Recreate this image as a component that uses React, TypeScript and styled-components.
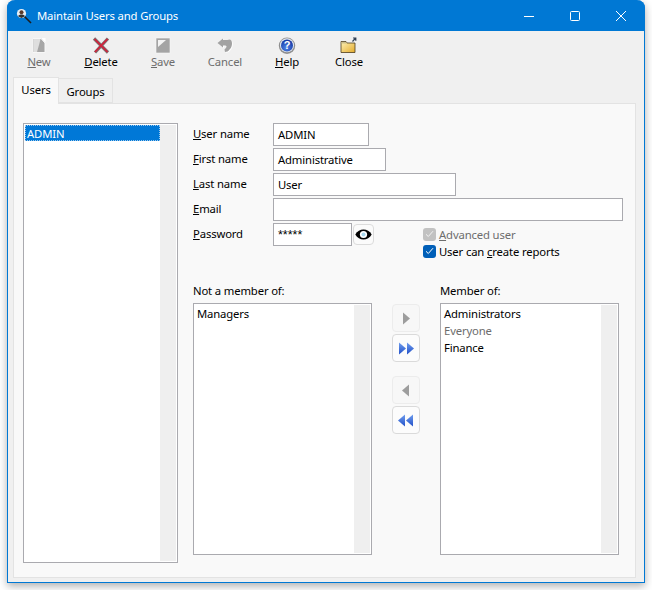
import React from "react";
import styled, { createGlobalStyle } from "styled-components";

const Global = createGlobalStyle`
  html, body { margin: 0; padding: 0; background: #fff; }
  body { width: 652px; height: 590px; overflow: hidden; font-family: "Noto Sans", "Open Sans", sans-serif; font-size: 11.3px; letter-spacing: -0.15px; color: #000; }
  #root { width: 652px; height: 590px; }
  * { box-sizing: border-box; }
  u { text-underline-offset: 1px; }
`;

const Page = styled.div`
  width: 652px;
  height: 590px;
  padding-left: 7px;
`;
const Window = styled.div`
  width: 638px;
  height: 583px;
  display: flex;
  flex-direction: column;
  background: #f0f0f0;
  border: 1px solid #0078d4;
  border-top: 0;
  border-radius: 8px 8px 0 0;
  box-shadow: 0 3px 9px rgba(0, 0, 0, 0.32);
`;
const TitleBar = styled.div`
  height: 31px;
  margin: 0 -1px;
  display: flex;
  align-items: center;
  background: #0078d4;
  border-radius: 8px 8px 0 0;
  color: #fff;
  padding: 0 1px 0 9px;
`;
const TitleText = styled.span`
  margin-left: 5px;
  flex: 1;
`;
const WinButton = styled.div`
  width: 46px;
  height: 31px;
  display: flex;
  align-items: center;
  justify-content: center;
`;
const Toolbar = styled.div`
  height: 46px;
  display: flex;
`;
const ToolItem = styled.div<{ $off?: boolean }>`
  width: 62px;
  display: flex;
  flex-direction: column;
  align-items: center;
  padding-top: 6px;
  color: ${(p) => (p.$off ? "#6d6d6d" : "#000")};
  line-height: 16px;
  svg { display: block; }
`;
const TabStrip = styled.div`
  height: 26px;
  padding-left: 5px;
  display: flex;
  align-items: flex-end;
`;
const Tab = styled.div<{ $active?: boolean }>`
  height: ${(p) => (p.$active ? 27 : 25)}px;
  width: ${(p) => (p.$active ? 46 : 54)}px;
  margin-bottom: ${(p) => (p.$active ? -1 : 0)}px;
  padding: ${(p) => (p.$active ? "0 0 4px" : "2px 0 0")};
  background: ${(p) => (p.$active ? "#f9f9f9" : "#f0f0f0")};
  border: 1px solid #e3e3e3;
  border-bottom: ${(p) => (p.$active ? "0" : "1px solid #e3e3e3")};
  border-left: ${(p) => (p.$active ? "1px solid #e3e3e3" : "0")};
  position: relative;
  z-index: ${(p) => (p.$active ? 1 : 0)};
  display: flex;
  align-items: center;
  justify-content: center;
`;
const Panel = styled.div`
  flex: 1;
  margin: 0 8px 4px 5px;
  background: #f9f9f9;
  border: 1px solid #e3e3e3;
  padding: 19px 0 0 9px;
  display: flex;
  gap: 15px;
  align-items: flex-start;
`;
const ListBox = styled.div<{ $w: number; $h: number }>`
  width: ${(p) => p.$w}px;
  height: ${(p) => p.$h}px;
  background: #fff;
  border: 1px solid #aaaaaf;
  padding: 1px;
  display: flex;
`;
const ListItems = styled.div<{ $padded?: boolean }>`
  flex: 1;
  padding: ${(p) => (p.$padded ? "0 2px" : "0")};
  line-height: 17px;
`;
const ScrollTrack = styled.div`
  width: 16px;
  background: #efefef;
`;
const UserRow = styled.div`
  height: 16px;
  line-height: 17px;
  padding-left: 2px;
  background: #0078d7;
  color: #fff;
  outline: 1px dotted #9dc9ee;
  outline-offset: -1px;
`;
const GroupItem = styled.div<{ $off?: boolean }>`
  color: ${(p) => (p.$off ? "#6d6d6d" : "#000")};
`;
const Form = styled.div`
  width: 430px;
`;
const Rows = styled.div`
  display: flex;
  flex-direction: column;
  gap: 2px;
`;
const Row = styled.div`
  display: flex;
  align-items: flex-start;
`;
const Label = styled.label`
  width: 80px;
  height: 23px;
  line-height: 22px;
`;
const Input = styled.div<{ $w: number }>`
  width: ${(p) => p.$w}px;
  height: 23px;
  flex: none;
  background: #fff;
  border: 1px solid #aaaaaf;
  padding-left: 4px;
  line-height: 22px;
`;
const Mask = styled.span`
  font-family: "Liberation Sans", sans-serif;
  font-size: 12.5px;
  letter-spacing: 0;
`;
const EyeButton = styled.div`
  width: 21px;
  height: 21px;
  margin: 1px 0 0 1px;
  background: #fbfbfb;
  border: 1px solid #dcdcdc;
  border-radius: 4px;
  display: flex;
  align-items: center;
  justify-content: center;
`;
const Checks = styled.div`
  margin-left: 49px;
  padding-top: 4px;
  display: flex;
  flex-direction: column;
  gap: 3px;
`;
const Check = styled.div<{ $off?: boolean }>`
  display: flex;
  align-items: center;
  gap: 3px;
  height: 14px;
  color: ${(p) => (p.$off ? "#6d6d6d" : "#000")};
`;
const Box = styled.span<{ $off?: boolean }>`
  width: 13px;
  height: 13px;
  border-radius: 3px;
  background: ${(p) => (p.$off ? "#c2c2c2" : "#005fb8")};
  display: flex;
  align-items: center;
  justify-content: center;
`;
const Members = styled.div`
  display: grid;
  grid-template-columns: 179px 28px 179px;
  column-gap: 20px;
  margin-top: 26px;
`;
const ListHead = styled.div`
  height: 19px;
  line-height: 13px;
`;
const Column = styled.div`
  display: flex;
  flex-direction: column;
`;
const Movers = styled.div`
  padding-top: 20px;
  display: flex;
  flex-direction: column;
  gap: 14px;
`;
const MoverGroup = styled.div`
  display: flex;
  flex-direction: column;
  gap: 2px;
`;
const Mover = styled.div<{ $off?: boolean }>`
  width: 28px;
  height: 28px;
  border: 1px solid ${(p) => (p.$off ? "#ececec" : "#dadada")};
  border-radius: 4px;
  background: ${(p) => (p.$off ? "#f7f7f7" : "#fcfcfc")};
  display: flex;
  align-items: center;
  justify-content: center;
`;

const Arrow = ({ dir, n, off }: { dir: "l" | "r"; n: 1 | 2; off?: boolean }) => {
  const fill = off ? "#9d9d9d" : "url(#mv)";
  const tri = (x: number) =>
    dir === "r" ? `M${x} 0.5 L${x + 7} 6.5 L${x} 12.5Z` : `M${x + 7} 0.5 L${x} 6.5 L${x + 7} 12.5Z`;
  return (
    <svg width="16" height="13" viewBox="0 0 16 13">
      <defs>
        <linearGradient id="mv" x1="0" y1="0" x2="0" y2="1">
          <stop offset="0" stopColor="#6f9dee" />
          <stop offset="1" stopColor="#2250c8" />
        </linearGradient>
      </defs>
      {n === 1 ? <path d={tri(dir === "r" ? 5 : 4)} fill={fill} /> : (
        <>
          <path d={tri(dir === "r" ? 1 : 0)} fill={fill} />
          <path d={tri(dir === "r" ? 9 : 8)} fill={fill} />
        </>
      )}
    </svg>
  );
};

const IconNew = () => (
  <svg width="14" height="17" viewBox="0 0 14 17">
    <path d="M1 1.5H9L13 6V15.5H1Z" fill="#a6a6a6" stroke="#f7f7f7" />
    <path d="M1.5 2H8.5L7 8L5 15H1.5Z" fill="#dedede" />
    <path d="M9.5 1H13.5V5.5Z" fill="#fff" />
  </svg>
);
const IconDelete = () => (
  <svg width="18" height="17" viewBox="0 0 18 17">
    <path d="M2 1.5L16 15.5M16 1.5L3 15.5" stroke="#4d3a3a" strokeWidth="3.2" opacity=".7" />
    <path d="M2.5 2L15.5 15M15.5 2L3 15" stroke="#d4203a" strokeWidth="1.7" />
  </svg>
);
const IconSave = () => (
  <svg width="16" height="17" viewBox="0 0 16 17">
    <rect x="1" y="1" width="14" height="15" fill="#a4a4a4" stroke="#f7f7f7" strokeWidth=".6" />
    <path d="M3 3H11L3 10Z" fill="#f3f3f3" />
  </svg>
);
const cancelPath =
  "M0.5 6L6 1.5V3H10.5C13 1.5 15 3 15 6.5C15 10.5 12.5 13 10.5 14.5L8 15L7.5 12.5C8.5 11.5 9.5 10.5 9.5 9.5C9.5 8.5 8.5 8.5 7.5 8.5H6V10.5Z";
const IconCancel = () => (
  <svg width="16" height="17" viewBox="0 0 16 17">
    <path d={cancelPath} fill="#fff" transform="translate(0.8 0.8)" />
    <path d={cancelPath} fill="#a2a2a2" />
  </svg>
);
const IconHelp = () => (
  <svg width="18" height="17" viewBox="0 0 18 17">
    <defs>
      <radialGradient id="hb" cx="0.45" cy="0.7" r="0.7">
        <stop offset="0" stopColor="#4f86e8" />
        <stop offset="1" stopColor="#1234a0" />
      </radialGradient>
    </defs>
    <circle cx="9" cy="8.7" r="8.2" fill="#8e8e8e" />
    <circle cx="9" cy="8.2" r="7" fill="#dfe6f0" />
    <circle cx="9" cy="8.4" r="6" fill="url(#hb)" />
    <text x="9" y="12.3" textAnchor="middle" fontFamily="Liberation Sans, sans-serif" fontWeight="700" fontSize="11" fill="#fff">?</text>
  </svg>
);
const IconClose = () => (
  <svg width="18" height="17" viewBox="0 0 18 17">
    <defs>
      <linearGradient id="fd" x1="0" y1="0" x2="1" y2="1">
        <stop offset="0" stopColor="#fff3b8" />
        <stop offset="1" stopColor="#e3ab2d" />
      </linearGradient>
    </defs>
    <path d="M1 4.5H6L7 6H15V15.5H1Z" fill="url(#fd)" stroke="#4c3c1e" strokeWidth="0.8" />
    <path d="M1.5 5H6L7 6.5H2Z" fill="#c9bd8a" />
    <path d="M12.5 4.5L15.5 1.2M13 1H15.8V3.8" stroke="#2f3f55" strokeWidth="1.2" fill="none" />
  </svg>
);
const IconTitle = () => (
  <svg width="16" height="16" viewBox="0 0 16 16">
    <path d="M7.5 7.5L15 15" stroke="#1d1d1d" strokeWidth="1.6" />
    <circle cx="5.5" cy="5.5" r="4.6" fill="#e6eef5" />
    <circle cx="5.5" cy="4.2" r="2" fill="#5b3a2a" />
    <path d="M2 8.2C3 6 8 6 9 8.2L5.5 10Z" fill="#34302e" />
  </svg>
);
const IconEye = () => (
  <svg width="17" height="13" viewBox="0 0 17 13">
    <path d="M0.3 6.5C4 -0.3 13 -0.3 16.7 6.5C13 13.3 4 13.3 0.3 6.5Z" fill="#000" />
    <circle cx="8.5" cy="6.5" r="3.6" fill="#fff" />
    <circle cx="8.5" cy="6.5" r="2" fill="#a8d8ef" />
  </svg>
);
const Tick = ({ c }: { c: string }) => (
  <svg width="9" height="8" viewBox="0 0 9 8">
    <path d="M1 4.3L3.3 6.5L8 1.2" stroke={c} strokeWidth="1" fill="none" />
  </svg>
);

export default function App() {
  return (
    <Page>
      <Global />
      <Window>
        <TitleBar>
          <IconTitle />
          <TitleText>Maintain Users and Groups</TitleText>
          <WinButton>
            <svg width="10" height="10" viewBox="0 0 10 10"><path d="M0 5.5H10" stroke="#fff" /></svg>
          </WinButton>
          <WinButton>
            <svg width="10" height="10" viewBox="0 0 10 10"><rect x=".5" y=".5" width="9" height="9" rx="1" fill="none" stroke="#fff" /></svg>
          </WinButton>
          <WinButton>
            <svg width="10" height="10" viewBox="0 0 10 10"><path d="M0 0L10 10M10 0L0 10" stroke="#fff" /></svg>
          </WinButton>
        </TitleBar>
        <Toolbar>
          <ToolItem $off><IconNew /><span><u>N</u>ew</span></ToolItem>
          <ToolItem><IconDelete /><span><u>D</u>elete</span></ToolItem>
          <ToolItem $off><IconSave /><span><u>S</u>ave</span></ToolItem>
          <ToolItem $off><IconCancel /><span>Cancel</span></ToolItem>
          <ToolItem><IconHelp /><span><u>H</u>elp</span></ToolItem>
          <ToolItem><IconClose /><span>Close</span></ToolItem>
        </Toolbar>
        <TabStrip>
          <Tab $active>Users</Tab>
          <Tab>Groups</Tab>
        </TabStrip>
        <Panel>
          <ListBox $w={155} $h={440}>
            <ListItems><UserRow>ADMIN</UserRow></ListItems>
            <ScrollTrack />
          </ListBox>
          <Form>
            <Rows>
              <Row><Label><u>U</u>ser name</Label><Input $w={96}>ADMIN</Input></Row>
              <Row><Label><u>F</u>irst name</Label><Input $w={113}>Administrative</Input></Row>
              <Row><Label><u>L</u>ast name</Label><Input $w={183}>User</Input></Row>
              <Row><Label><u>E</u>mail</Label><Input $w={350} /></Row>
              <Row>
                <Label><u>P</u>assword</Label>
                <Input $w={79}><Mask>*****</Mask></Input>
                <EyeButton><IconEye /></EyeButton>
                <Checks>
                  <Check $off><Box $off><Tick c="#f2f2f2" /></Box><span><u>A</u>dvanced user</span></Check>
                  <Check><Box><Tick c="#fff" /></Box><span>User can <u>c</u>reate reports</span></Check>
                </Checks>
              </Row>
            </Rows>
            <Members>
              <Column>
                <ListHead>Not a member of:</ListHead>
                <ListBox $w={179} $h={252}>
                  <ListItems $padded><GroupItem>Managers</GroupItem></ListItems>
                  <ScrollTrack />
                </ListBox>
              </Column>
              <Movers>
                <MoverGroup>
                  <Mover $off><Arrow dir="r" n={1} off /></Mover>
                  <Mover><Arrow dir="r" n={2} /></Mover>
                </MoverGroup>
                <MoverGroup>
                  <Mover $off><Arrow dir="l" n={1} off /></Mover>
                  <Mover><Arrow dir="l" n={2} /></Mover>
                </MoverGroup>
              </Movers>
              <Column>
                <ListHead>Member of:</ListHead>
                <ListBox $w={179} $h={252}>
                  <ListItems $padded>
                    <GroupItem>Administrators</GroupItem>
                    <GroupItem $off>Everyone</GroupItem>
                    <GroupItem>Finance</GroupItem>
                  </ListItems>
                  <ScrollTrack />
                </ListBox>
              </Column>
            </Members>
          </Form>
        </Panel>
      </Window>
    </Page>
  );
}
